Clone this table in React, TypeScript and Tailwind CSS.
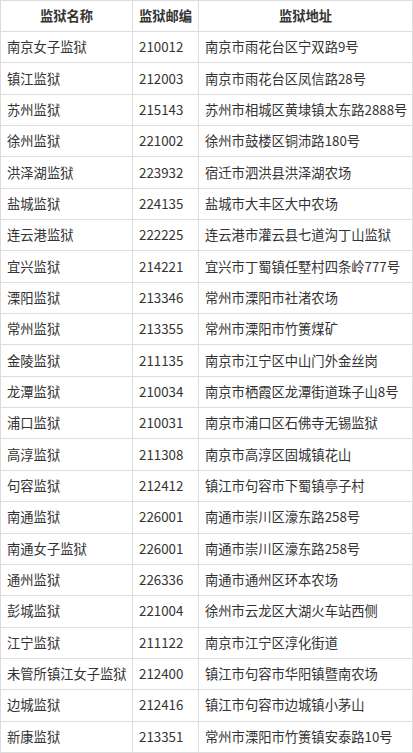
const rows: [string, string, string][] = [
  ['南京女子监狱', '210012', '南京市雨花台区宁双路9号'],
  ['镇江监狱', '212003', '南京市雨花台区凤信路28号'],
  ['苏州监狱', '215143', '苏州市相城区黄埭镇太东路2888号'],
  ['徐州监狱', '221002', '徐州市鼓楼区铜沛路180号'],
  ['洪泽湖监狱', '223932', '宿迁市泗洪县洪泽湖农场'],
  ['盐城监狱', '224135', '盐城市大丰区大中农场'],
  ['连云港监狱', '222225', '连云港市灌云县七道沟丁山监狱'],
  ['宜兴监狱', '214221', '宜兴市丁蜀镇任墅村四条岭777号'],
  ['溧阳监狱', '213346', '常州市溧阳市社渚农场'],
  ['常州监狱', '213355', '常州市溧阳市竹箦煤矿'],
  ['金陵监狱', '211135', '南京市江宁区中山门外金丝岗'],
  ['龙潭监狱', '210034', '南京市栖霞区龙潭街道珠子山8号'],
  ['浦口监狱', '210031', '南京市浦口区石佛寺无锡监狱'],
  ['高淳监狱', '211308', '南京市高淳区固城镇花山'],
  ['句容监狱', '212412', '镇江市句容市下蜀镇亭子村'],
  ['南通监狱', '226001', '南通市崇川区濠东路258号'],
  ['南通女子监狱', '226001', '南通市崇川区濠东路258号'],
  ['通州监狱', '226336', '南通市通州区环本农场'],
  ['彭城监狱', '221004', '徐州市云龙区大湖火车站西侧'],
  ['江宁监狱', '211122', '南京市江宁区淳化街道'],
  ['未管所镇江女子监狱', '212400', '镇江市句容市华阳镇暨南农场'],
  ['边城监狱', '212416', '镇江市句容市边城镇小茅山'],
  ['新康监狱', '213351', '常州市溧阳市竹箦镇安泰路10号'],
];

export default function App() {
  return (
    <div className="w-[413px] bg-white text-[#333] font-['Noto_Sans_CJK_SC',sans-serif]">
      <table className="w-full border-collapse table-fixed text-[13.3px]">
        <colgroup>
          <col className="w-[132px]" />
          <col className="w-[66px]" />
          <col />
        </colgroup>
        <thead>
          <tr className="h-[31px]">
            <th className="border border-[#ddd] font-bold text-center">监狱名称</th>
            <th className="border border-[#ddd] font-bold text-center">监狱邮编</th>
            <th className="border border-[#ddd] font-bold text-center">监狱地址</th>
          </tr>
        </thead>
        <tbody>
          {rows.map((r, i) => (
            <tr key={i} className="h-[31.35px]">
              <td className="border border-[#ddd] px-[6px] whitespace-nowrap">{r[0]}</td>
              <td className="border border-[#ddd] px-[6px] whitespace-nowrap">{r[1]}</td>
              <td className="border border-[#ddd] px-[6px] whitespace-nowrap">{r[2]}</td>
            </tr>
          ))}
        </tbody>
      </table>
    </div>
  );
}
